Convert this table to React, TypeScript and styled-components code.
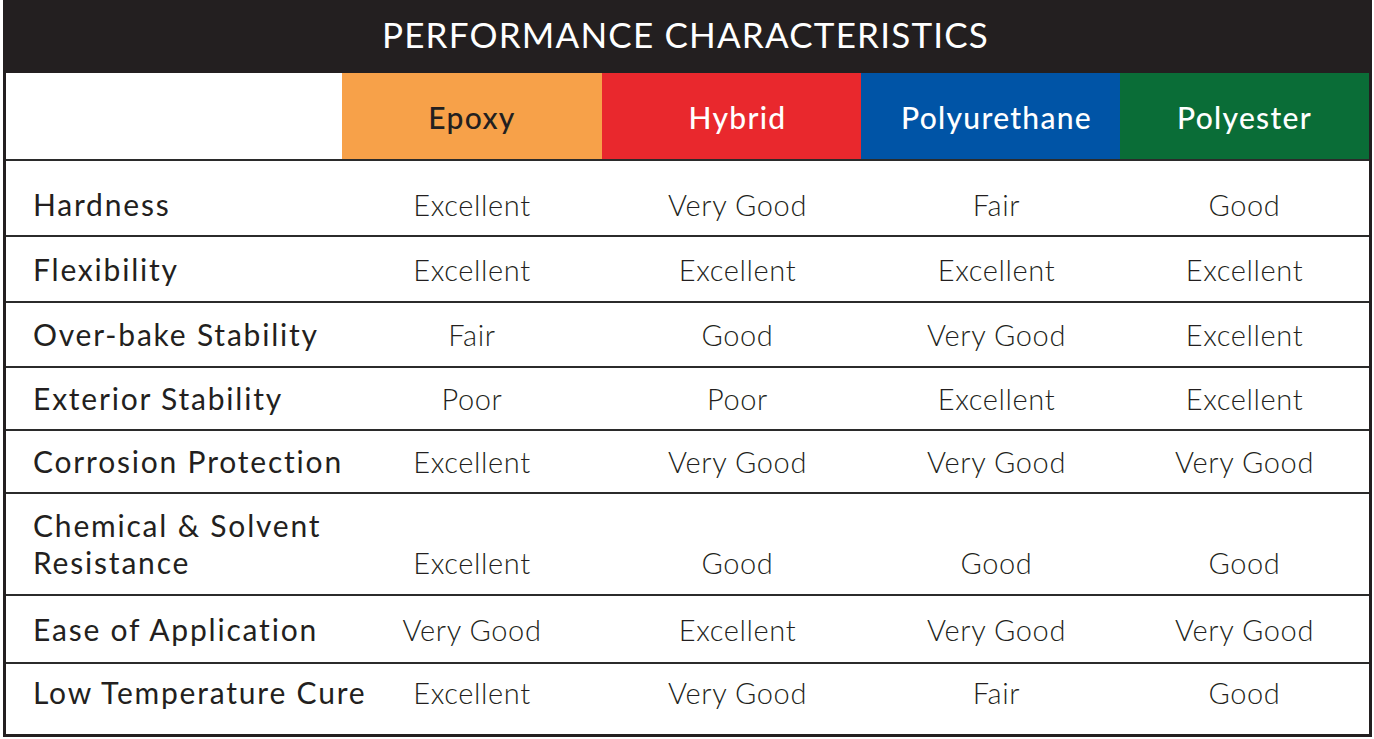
import React from "react";
import styled, { createGlobalStyle } from "styled-components";

const Global = createGlobalStyle`
  html, body { margin: 0; padding: 0; background: #ffffff; }
  body { font-family: "Lato", "Liberation Sans", sans-serif; color: #231f20; }
`;

const Frame = styled.div`
  margin-left: 3px;
  width: 1369px;
  box-sizing: border-box;
  border-left: 3px solid #231f20;
  border-right: 3px solid #231f20;
  border-bottom: 3px solid #231f20;
  background: #fff;
`;

const Title = styled.div`
  height: 73px;
  box-sizing: border-box;
  margin: 0 -3px;
  background: #231f20;
  color: #fff;
  display: flex;
  align-items: center;
  justify-content: center;
  font-size: 35px;
  font-weight: 400;
  letter-spacing: 1.2px;
  padding-right: 4px;
  padding-bottom: 5px;
`;

const cols = "336px 260px 259px 259px 249px";

const HeadRow = styled.div`
  display: grid;
  grid-template-columns: ${cols};
  height: 86px;
  border-bottom: 2px solid #2b2b2b;
`;

const HeadCell = styled.div<{ $bg: string; $fg: string; $shift?: number }>`
  background: ${(p) => p.$bg};
  color: ${(p) => p.$fg};
  display: flex;
  align-items: center;
  justify-content: center;
  font-size: 30px;
  font-weight: 500;
  letter-spacing: 1.3px;
  padding-top: 2px;
  padding-left: ${(p) => p.$shift ?? 0}px;
`;

const Row = styled.div<{ $h: number; $last?: boolean; $pt?: number; $pb?: number }>`
  display: grid;
  grid-template-columns: ${cols};
  height: ${(p) => p.$h}px;
  box-sizing: border-box;
  border-bottom: ${(p) => (p.$last ? "none" : "2px solid #2b2b2b")};
  padding-top: ${(p) => p.$pt ?? 0}px;
  padding-bottom: ${(p) => p.$pb ?? 0}px;
  align-items: center;
`;

const Label = styled.div`
  padding-left: 27px;
  font-size: 30px;
  font-weight: 400;
  letter-spacing: 1.8px;
  line-height: 37px;
  color: #231f20;
  white-space: nowrap;
`;

const Value = styled.div<{ $end?: boolean; $shift?: number }>`
  text-align: center;
  font-size: 29px;
  font-weight: 300;
  letter-spacing: 0.6px;
  color: #231f20;
  white-space: nowrap;
  align-self: ${(p) => (p.$end ? "end" : "center")};
  padding-bottom: ${(p) => (p.$end ? "14px" : "0")};
  padding-left: ${(p) => p.$shift ?? 0}px;
`;

const heads = [
  { t: "Epoxy", bg: "#f7a149", fg: "#231f20" },
  { t: "Hybrid", bg: "#e9282d", fg: "#ffffff" },
  { t: "Polyurethane", bg: "#0054a6", fg: "#ffffff" },
  { t: "Polyester", bg: "#0a6d37", fg: "#ffffff" },
];

const shifts = [0, 12, 12, -4];

type R = { label: React.ReactNode; v: string[]; h: number; pt?: number; pb?: number; end?: boolean };

const rows: R[] = [
  { label: "Hardness", v: ["Excellent", "Very Good", "Fair", "Good"], h: 76, pt: 12 },
  { label: "Flexibility", v: ["Excellent", "Excellent", "Excellent", "Excellent"], h: 66 },
  { label: "Over-bake Stability", v: ["Fair", "Good", "Very Good", "Excellent"], h: 65 },
  { label: "Exterior Stability", v: ["Poor", "Poor", "Excellent", "Excellent"], h: 63 },
  { label: "Corrosion Protection", v: ["Excellent", "Very Good", "Very Good", "Very Good"], h: 63 },
  {
    label: (
      <>
        Chemical &amp; Solvent
        <br />
        Resistance
      </>
    ),
    v: ["Excellent", "Good", "Good", "Good"],
    h: 102,
    end: true,
  },
  { label: "Ease of Application", v: ["Very Good", "Excellent", "Very Good", "Very Good"], h: 68 },
  { label: "Low Temperature Cure", v: ["Excellent", "Very Good", "Fair", "Good"], h: 70, pb: 14 },
];

export default function App() {
  return (
    <>
      <Global />
      <Frame>
        <Title>PERFORMANCE CHARACTERISTICS</Title>
        <HeadRow>
          <HeadCell $bg="#ffffff" $fg="#231f20" />
          {heads.map((h, j) => (
            <HeadCell key={h.t} $bg={h.bg} $fg={h.fg} $shift={shifts[j]}>
              {h.t}
            </HeadCell>
          ))}
        </HeadRow>
        {rows.map((r, i) => (
          <Row key={i} $h={r.h} $pt={r.pt} $pb={r.pb} $last={i === rows.length - 1}>
            <Label>{r.label}</Label>
            {r.v.map((v, j) => (
              <Value key={j} $end={r.end} $shift={shifts[j]}>
                {v}
              </Value>
            ))}
          </Row>
        ))}
      </Frame>
    </>
  );
}
